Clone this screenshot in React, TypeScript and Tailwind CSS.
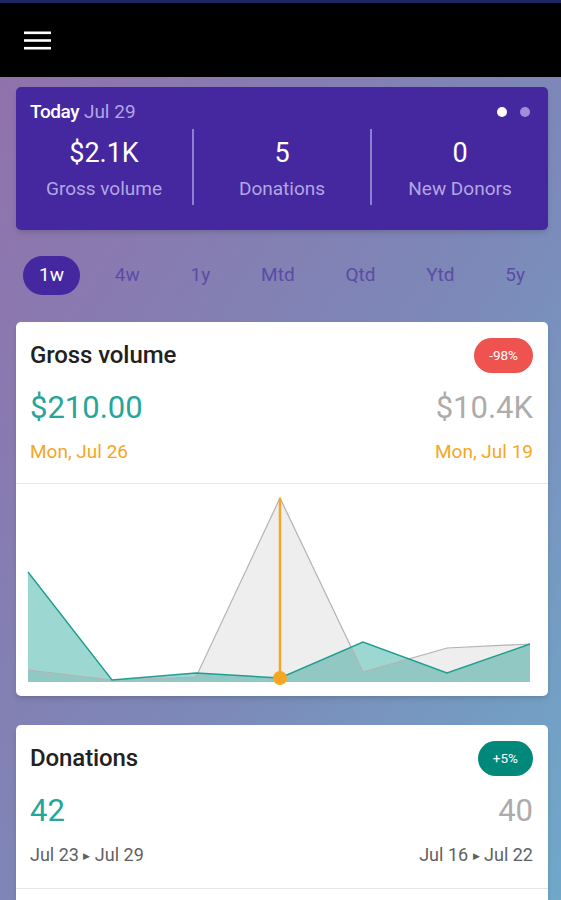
import { Fragment } from "react";

const tabs = ["1w", "4w", "1y", "Mtd", "Qtd", "Ytd", "5y"];

const stats = [
  { value: "$2.1K", label: "Gross volume" },
  { value: "5", label: "Donations" },
  { value: "0", label: "New Donors" },
];

// chart coordinates inside the 532x212 svg
const xs = [12, 96, 180, 264, 347, 431, 514];
const tealY = [88, 196, 189, 194, 158, 189, 160];
const grayY = [186, 196, 193, 14, 188, 164, 160];
const base = 198;

const line = (ys: number[]) => xs.map((x, i) => `${x},${ys[i]}`).join(" ");
const area = (ys: number[]) => `${line(ys)} ${xs[xs.length - 1]},${base} ${xs[0]},${base}`;

function Badge({ text, color }: { text: string; color: string }) {
  return (
    <span className={`flex h-[35px] items-center rounded-full px-[15px] text-[13.5px] text-white ${color}`}>
      {text}
    </span>
  );
}

function Chart() {
  return (
    <svg width="532" height="212" viewBox="0 0 532 212" className="block">
      <polygon points={area(tealY)} fill="#26a69a" fillOpacity="0.45" />
      <polygon points={area(grayY)} fill="#000000" fillOpacity="0.065" />
      <polyline points={line(grayY)} fill="none" stroke="#b3b3b3" strokeWidth="1.2" />
      <polyline points={line(tealY)} fill="none" stroke="#1f9e90" strokeWidth="1.4" />
      <line x1="264" y1="14" x2="264" y2="194" stroke="#f5a623" strokeWidth="2.5" />
      <circle cx="264" cy="194" r="7" fill="#f5a623" />
    </svg>
  );
}

export default function App() {
  return (
    <div className="h-[900px] w-[561px] overflow-hidden bg-[linear-gradient(to_bottom_right,#9270aa,#7d87b8_55%,#70a8ca)] font-['Roboto',sans-serif]">
      <div className="h-[3px] bg-[#1f2763]" />
      <header className="flex h-[74px] items-center bg-black pl-[24px]">
        <svg width="27" height="19" viewBox="0 0 27 19">
          <rect x="0" y="0.5" width="27" height="2.6" fill="white" />
          <rect x="0" y="8.2" width="27" height="2.6" fill="white" />
          <rect x="0" y="15.9" width="27" height="2.6" fill="white" />
        </svg>
      </header>

      <main className="pl-[16px] pr-[13px]">
        <section className="mt-[10px] h-[143px] rounded-[5px] bg-[#4527a0] shadow-md">
          <div className="flex items-center justify-between pl-[14px] pr-[18px] pt-[14px]">
            <p className="text-[19px] leading-[22px]">
              <span className="font-medium tracking-[-0.4px] text-white">Today</span>{" "}
              <span className="text-[#b3a6e3]">Jul 29</span>
            </p>
            <div className="flex items-center gap-[13px]">
              <span className="h-[10px] w-[10px] rounded-full bg-white" />
              <span className="h-[10px] w-[10px] rounded-full bg-[#9f8fd8]" />
            </div>
          </div>
          <div className="mt-[6px] flex">
            {stats.map((s, i) => (
              <Fragment key={s.label}>
                {i > 0 && <div className="h-[76px] w-[2px] bg-[#8f80cf]" />}
                <div className="flex flex-1 flex-col items-center">
                  <span className="mt-[8px] text-[27px] leading-[32px] text-white">{s.value}</span>
                  <span className="mt-[9px] text-[19px] leading-[22px] text-[#b3a6e3]">{s.label}</span>
                </div>
              </Fragment>
            ))}
          </div>
        </section>

        <nav className="mt-[26px] flex justify-between px-[7px]">
          {tabs.map((t, i) => (
            <span
              key={t}
              className={`flex h-[39px] items-center rounded-full px-[16px] text-[19px] ${
                i === 0 ? "bg-[#4527a0] text-white" : "text-[#5b4ba6]"
              }`}
            >
              {t}
            </span>
          ))}
        </nav>

        <section className="mt-[27px] h-[374px] overflow-hidden rounded-[5px] bg-white shadow-md">
          <div className="flex items-center justify-between pl-[14px] pr-[15px] pt-[15px]">
            <h2 className="text-[24px] font-medium tracking-[-0.1px] text-[#212121]">Gross volume</h2>
            <Badge text="-98%" color="bg-[#ef5350]" />
          </div>
          <div className="mt-[17px] flex items-center justify-between pl-[14px] pr-[15px] text-[31px] leading-[36px]">
            <span className="text-[#26a69a]">$210.00</span>
            <span className="text-[#acacac]">$10.4K</span>
          </div>
          <div className="mt-[16px] flex justify-between pl-[14px] pr-[15px] text-[19px] leading-[20px] text-[#f5a623]">
            <span>Mon, Jul 26</span>
            <span>Mon, Jul 19</span>
          </div>
          <div className="mt-[21px] border-t border-[#e6e6e6]">
            <Chart />
          </div>
        </section>

        <section className="mt-[29px] h-[300px] rounded-[5px] bg-white shadow-md">
          <div className="flex items-center justify-between pl-[14px] pr-[15px] pt-[15px]">
            <h2 className="text-[24px] font-medium tracking-[-0.1px] text-[#212121]">Donations</h2>
            <Badge text="+5%" color="bg-[#00897b]" />
          </div>
          <div className="mt-[17px] flex items-center justify-between pl-[14px] pr-[15px] text-[31px] leading-[36px]">
            <span className="text-[#26a69a]">42</span>
            <span className="text-[#acacac]">40</span>
          </div>
          <div className="mt-[16px] flex justify-between pl-[14px] pr-[15px] text-[18px] leading-[20px] text-[#616161]">
            <span>
              Jul 23 <span className="align-middle text-[9px]">▶</span> Jul 29
            </span>
            <span>
              Jul 16 <span className="align-middle text-[9px]">▶</span> Jul 22
            </span>
          </div>
          <div className="mt-[22px] border-t border-[#e6e6e6]" />
        </section>
      </main>
    </div>
  );
}
